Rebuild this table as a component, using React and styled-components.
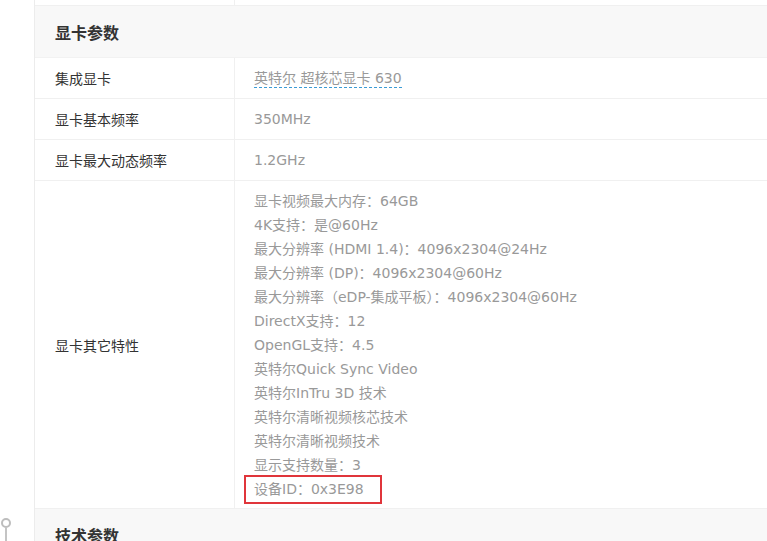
import React from "react";
import styled, { createGlobalStyle } from "styled-components";

const GlobalStyle = createGlobalStyle`
  html, body {
    margin: 0;
    padding: 0;
    background: #fff;
    overflow: hidden;
  }
  body {
    font-family: "Noto Sans CJK SC", sans-serif;
  }
`;

const Page = styled.div`
  position: relative;
  width: 767px;
  height: 541px;
  overflow: hidden;
  padding-left: 34px;
  box-sizing: border-box;
`;

const Table = styled.div`
  width: 800px;
  border-left: 1px solid #ececec;
  display: flex;
  flex-direction: column;
`;

const Row = styled.div`
  display: grid;
  grid-template-columns: 200px 1fr;
  border-bottom: 1px solid #f0f0f0;
  min-height: ${({ h }) => (h ? `${h}px` : "auto")};
`;

const Label = styled.div`
  display: flex;
  align-items: center;
  padding-left: 20px;
  font-size: 14px;
  color: #333;
  border-right: 1px solid #f0f0f0;
`;

const Value = styled.div`
  display: flex;
  flex-direction: column;
  justify-content: center;
  padding: ${({ multi }) => (multi ? "8px 0 7px 19px" : "0 0 0 19px")};
  font-family: "DejaVu Sans", "Noto Sans CJK SC", sans-serif;
  font-size: 14px;
  line-height: 24px;
  color: #999;
`;

const Line = styled.div`
  align-self: flex-start;
  white-space: nowrap;
`;

const Marked = styled.span`
  display: inline-block;
  position: relative;
  &::after {
    content: "";
    position: absolute;
    left: -10px;
    right: -18px;
    top: -2px;
    bottom: -3px;
    border: 2px solid #e0353b;
  }
`;

const LinkText = styled.span`
  border-bottom: 1px dashed #3a9bd5;
  padding-bottom: 1px;
  line-height: 18px;
`;

const SectionHead = styled.div`
  background: #f8f8f8;
  height: ${({ h }) => h}px;
  box-sizing: border-box;
  display: flex;
  align-items: center;
  padding-left: 20px;
  font-size: 16px;
  font-weight: 700;
  color: #333;
  border-bottom: 1px solid #f2f2f2;
`;

const Pin = styled.div`
  position: absolute;
  left: 1px;
  top: 518px;
  width: 10px;
  display: flex;
  flex-direction: column;
  align-items: center;
  &::before {
    content: "";
    width: 6px;
    height: 6px;
    border: 2px solid #bdbdbd;
    border-radius: 50%;
  }
  &::after {
    content: "";
    width: 2px;
    height: 13px;
    background: #c4c4c4;
  }
`;

const features = [
  "显卡视频最大内存：64GB",
  "4K支持：是@60Hz",
  "最大分辨率 (HDMI 1.4)：4096x2304@24Hz",
  "最大分辨率 (DP)：4096x2304@60Hz",
  "最大分辨率（eDP-集成平板）：4096x2304@60Hz",
  "DirectX支持：12",
  "OpenGL支持：4.5",
  "英特尔Quick Sync Video",
  "英特尔InTru 3D 技术",
  "英特尔清晰视频核芯技术",
  "英特尔清晰视频技术",
  "显示支持数量：3",
];

export default function App() {
  return (
    <>
      <GlobalStyle />
      <Page>
        <Table>
          <Row h={5}>
            <Label />
            <Value />
          </Row>
          <SectionHead h={52}>显卡参数</SectionHead>
          <Row h={40}>
            <Label>集成显卡</Label>
            <Value>
              <Line>
                <LinkText>英特尔 超核芯显卡 630</LinkText>
              </Line>
            </Value>
          </Row>
          <Row h={40}>
            <Label>显卡基本频率</Label>
            <Value>350MHz</Value>
          </Row>
          <Row h={40}>
            <Label>显卡最大动态频率</Label>
            <Value>1.2GHz</Value>
          </Row>
          <Row>
            <Label>显卡其它特性</Label>
            <Value multi>
              {features.map((f) => (
                <Line key={f}>{f}</Line>
              ))}
              <Line>
                <Marked>设备ID：0x3E98</Marked>
              </Line>
            </Value>
          </Row>
          <SectionHead h={52}>技术参数</SectionHead>
        </Table>
        <Pin />
      </Page>
    </>
  );
}
